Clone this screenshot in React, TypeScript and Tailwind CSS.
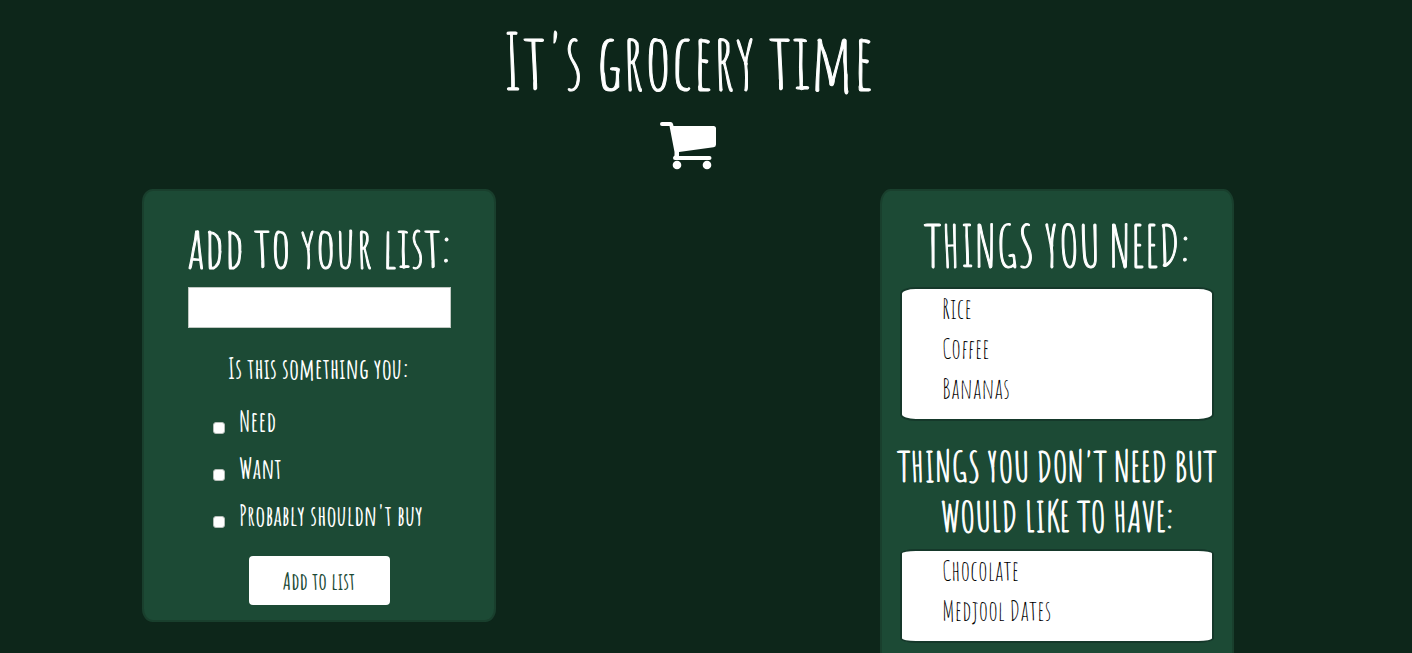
import { useState, type FormEvent } from "react";

const choices = ["Need", "Want", "Probably shouldn't buy"];

function CartIcon() {
  return (
    <svg viewBox="0 0 56 48" className="h-12 w-14 fill-white" aria-hidden="true">
      <path d="M2 0H10.500Q12.500 0 13 2L13.500 4H53.500Q56 4 56 6.500V22.500Q56 25 53.500 25.300L19 30V34H49.500A2 2 0 0 1 49.500 38H15Q13 38 13 36Q13 34.500 14.500 33.500V30L9.500 4H2A2 2 0 0 1 2 0Z" />
      <circle cx="17" cy="43" r="4.300" />
      <circle cx="47" cy="43" r="4.300" />
    </svg>
  );
}

function ItemList({ items }: { items: string[] }) {
  return (
    <ul className="mx-[18px] rounded-[5%] border-2 border-[#15382a] bg-white pb-[10px] pl-10 text-[28px] leading-10 text-black">
      {items.map((item) => (
        <li key={item}>{item}</li>
      ))}
    </ul>
  );
}

export default function App() {
  const [needs, setNeeds] = useState(["Rice", "Coffee", "Bananas"]);
  const [wants, setWants] = useState(["Chocolate", "Medjool Dates"]);
  const [name, setName] = useState("");
  const [checked, setChecked] = useState<string[]>([]);

  const toggle = (choice: string) =>
    setChecked((list) => (list.includes(choice) ? list.filter((c) => c !== choice) : [...list, choice]));

  const submit = (event: FormEvent) => {
    event.preventDefault();
    if (!name) return;
    if (checked.includes("Need")) setNeeds([...needs, name]);
    if (checked.includes("Want")) setWants([...wants, name]);
    setName("");
  };

  return (
    <div className="min-h-screen bg-[#0d261a] pr-9 font-['Amatic_SC','Liberation_Sans_Narrow','Liberation_Sans',sans-serif] text-white [font-kerning:none]">
      <header className="flex flex-col items-center pt-2">
        <h1 className="mb-2 text-center text-[77px] leading-[106px] [-webkit-text-stroke:1px_white]">It's grocery time</h1>
        <CartIcon />
      </header>
      <main className="flex flex-wrap items-start justify-between gap-8 px-[142px] pt-[19px]">
        <form onSubmit={submit} className="flex w-[354px] flex-col items-center rounded-[3%] border-2 border-[#193f2d] bg-[#1c4a35] pt-6 pb-[15px]">
          <label htmlFor="item" className="mb-[10px] text-[57px] leading-[62px] [-webkit-text-stroke:1px_white]">
            add to your list:
          </label>
          <input
            id="item"
            value={name}
            onChange={(event) => setName(event.target.value)}
            className="h-[41px] w-[263px] border border-[#c0c8c2] bg-white px-2 text-[28px] text-black"
          />
          <fieldset className="w-full">
            <legend className="w-full pt-[21px] pb-[9px] text-center text-[28px] leading-10 font-bold">
              Is this something you:
            </legend>
            {choices.map((choice) => (
              <label key={choice} className="flex h-[47px] items-center gap-[14px] pl-[69px] text-[28px] font-bold">
                <input
                  type="checkbox"
                  checked={checked.includes(choice)}
                  onChange={() => toggle(choice)}
                  className="mt-3 size-3 appearance-none rounded-[3px] border border-[#b5bdb8] bg-white checked:bg-[#0d261b]"
                />
                {choice}
              </label>
            ))}
          </fieldset>
          <button type="submit" className="mt-[17px] h-[49px] w-[141px] rounded-[4px] bg-white text-[24px] font-bold text-[#1c4a35]">
            Add to list
          </button>
        </form>
        <section className="w-[354px] rounded-[3%] border-2 border-[#193f2d] bg-[#1c4a35] pt-6 pb-12">
          <h2 className="mb-[10px] text-center text-[56px] leading-[62px] uppercase [-webkit-text-stroke:1px_white]">Things you need:</h2>
          <ItemList items={needs} />
          <h2 className="px-2 pt-5 pb-2 text-center text-[42px] leading-[50px] uppercase [-webkit-text-stroke:1px_white]">
            Things you don't need but would like to have:
          </h2>
          <ItemList items={wants} />
        </section>
      </main>
    </div>
  );
}
